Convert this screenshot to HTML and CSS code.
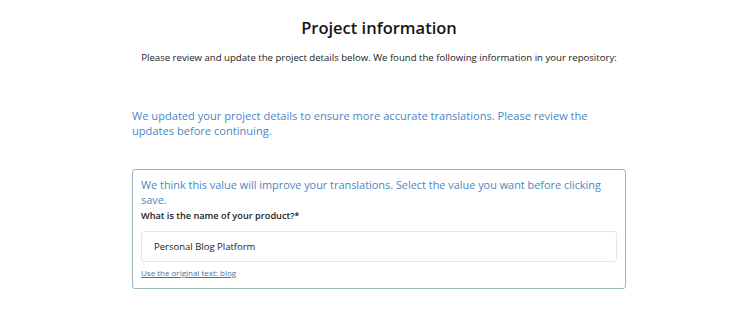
FILE: index.html
```html
<!DOCTYPE html>
<html lang="en">
<head>
    <meta charset="UTF-8">
    <meta name="viewport" content="width=device-width, initial-scale=1.0">
    <title>Project information</title>
    <link rel="stylesheet" href="styles.css">
</head>
<body>
<main class="project-info">
    <h1 class="page-title">Project information</h1>
    <p class="intro">Please review and update the project details below. We found the following information in your repository:</p>

    <p class="notice">We updated your project details to ensure more accurate translations. Please review the updates before continuing.</p>

    <div class="suggestion-box">
        <p class="suggestion-text">We think this value will improve your translations. Select the value you want before clicking save.</p>
        <label class="field-label" for="product-name">What is the name of your product?*</label>
        <input class="field-input" id="product-name" type="text" value="Personal Blog Platform">
        <a href="#" class="original-link">Use the original text: blog</a>
    </div>
</main>
</body>
</html>
```

FILE: styles.css
```css
body {
    font-family: 'Open Sans', sans-serif;
    background: white;
    margin: 0;
    color: #1b1b1b;
}
.project-info {
    padding: 14px 124px 0 132px;
}
.page-title {
    text-align: center;
    font-size: 16.5px;
    font-weight: 600;
    margin: 0;
    line-height: 28px;
    color: #161616;
}
.intro {
    text-align: center;
    font-size: 9.6px;
    margin: 10px 0 0;
    line-height: 12px;
}
.notice {
    color: #4a86c5;
    font-size: 11.1px;
    line-height: 15px;
    margin: 44px 0 0;
}
.suggestion-box {
    margin-top: 31px;
    border: 1px solid #9db8b8;
    border-radius: 3px;
    padding: 7px 8px 10px;
}
.suggestion-text {
    color: #4a86c5;
    font-size: 10.9px;
    line-height: 15px;
    margin: 0;
}
.field-label {
    display: block;
    font-size: 9.2px;
    font-weight: 600;
    line-height: 14px;
    margin-top: 2px;
}
.field-input {
    display: block;
    box-sizing: border-box;
    width: 100%;
    height: 31px;
    margin-top: 8px;
    border: 1px solid #e6e6e6;
    border-radius: 3px;
    padding: 0 12px;
    font-family: inherit;
    font-size: 9.5px;
    color: #222;
}
.original-link {
    display: block;
    width: fit-content;
    margin-top: 5px;
    font-size: 8px;
    line-height: 11px;
    color: #4a6fa5;
}
```
